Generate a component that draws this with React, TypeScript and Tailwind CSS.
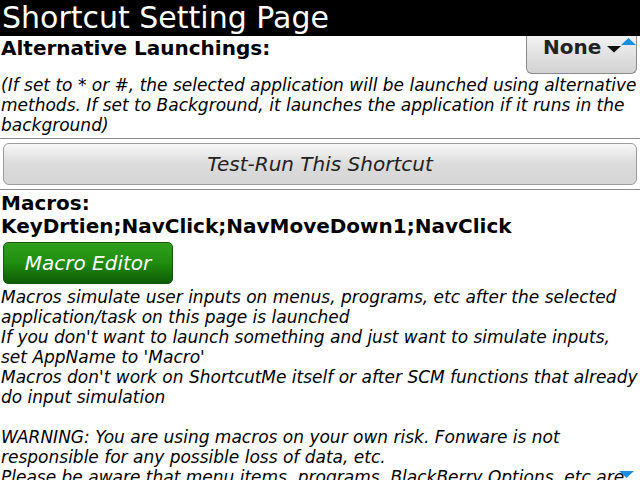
import React from "react";

const f = { fontFamily: '"DejaVu Sans", sans-serif' };

export default function App() {
  return (
    <div className="w-[640px] h-[480px] overflow-hidden bg-white text-black relative" style={f}>
      <div className="h-[36px] bg-black text-white text-[30px] leading-[36px] pl-[2px]">
        Shortcut Setting Page
      </div>
      <div className="h-[39px] flex justify-between items-start">
        <div className="font-bold text-[20px] leading-[23px] pl-[1px] pt-[1px]">Alternative Launchings:</div>
        <div className="relative mr-[3px] w-[111px] h-[38px] rounded-b-[6px] border border-t-0 border-[#8a8a8a] bg-gradient-to-b from-[#f2f2f2] to-[#d2d2d2] flex items-start pl-[16px]">
          <span className="font-bold text-[20px] leading-[23px] text-[#222]">None</span>
          <svg className="ml-[6px] mt-[9px]" width="14" height="8" viewBox="0 0 14 8"><path d="M0 1 L14 1 L7 7.5 Z" fill="#111" /></svg>
          <svg className="absolute right-[0px] top-[1px]" width="15" height="9" viewBox="0 0 15 9"><path d="M0 8 L15 8 L7.5 1 Z" fill="#1a8fe0" /></svg>
        </div>
      </div>
      <div className="italic text-[17px] leading-[20px] pl-[1px] pb-[3px] border-b border-[#8c8c8c]">
        (If set to * or #, the selected application will be launched using alternative methods. If set to Background, it launches the application if it runs in the background)
      </div>
      <div className="px-[3px] pt-[4px] pb-[4px] border-b border-[#8c8c8c]">
        <div className="h-[42px] rounded-[6px] border border-[#9a9a9a] bg-gradient-to-b from-[#f8f8f8] via-[#dcdcdc] to-[#d5d5d5] flex items-center justify-center italic text-[20px] text-[#222]">
          Test-Run This Shortcut
        </div>
      </div>
      <div className="font-bold text-[20px] leading-[23px] pl-[1px] pt-[2px]">
        <div>Macros:</div>
        <div>KeyDrtien;NavClick;NavMoveDown1;NavClick</div>
      </div>
      <div className="px-[3px] pt-[4px] pb-[3px]">
        <div className="w-[170px] h-[42px] rounded-[5px] bg-gradient-to-b from-[#2fa01a] via-[#208c10] to-[#0e5c06] border border-[#145a0a] flex items-center justify-center italic text-white text-[20px]">
          Macro Editor
        </div>
      </div>
      <div className="italic text-[17px] leading-[20px] pl-[1px]">
        <div>Macros simulate user inputs on menus, programs, etc after the selected application/task on this page is launched</div>
        <div>If you don't want to launch something and just want to simulate inputs, set AppName to 'Macro'</div>
        <div>Macros don't work on ShortcutMe itself or after SCM functions that already do input simulation</div>
        <div className="h-[20px]"></div>
        <div>WARNING: You are using macros on your own risk. Fonware is not responsible for any possible loss of data, etc.</div>
        <div>Please be aware that menu items, programs, BlackBerry Options, etc are different on every device</div>
      </div>
      <svg className="absolute right-[6px] bottom-[1px]" width="15" height="9" viewBox="0 0 15 9"><path d="M0 1 L15 1 L7.5 8 Z" fill="#1a8fe0" /></svg>
    </div>
  );
}
